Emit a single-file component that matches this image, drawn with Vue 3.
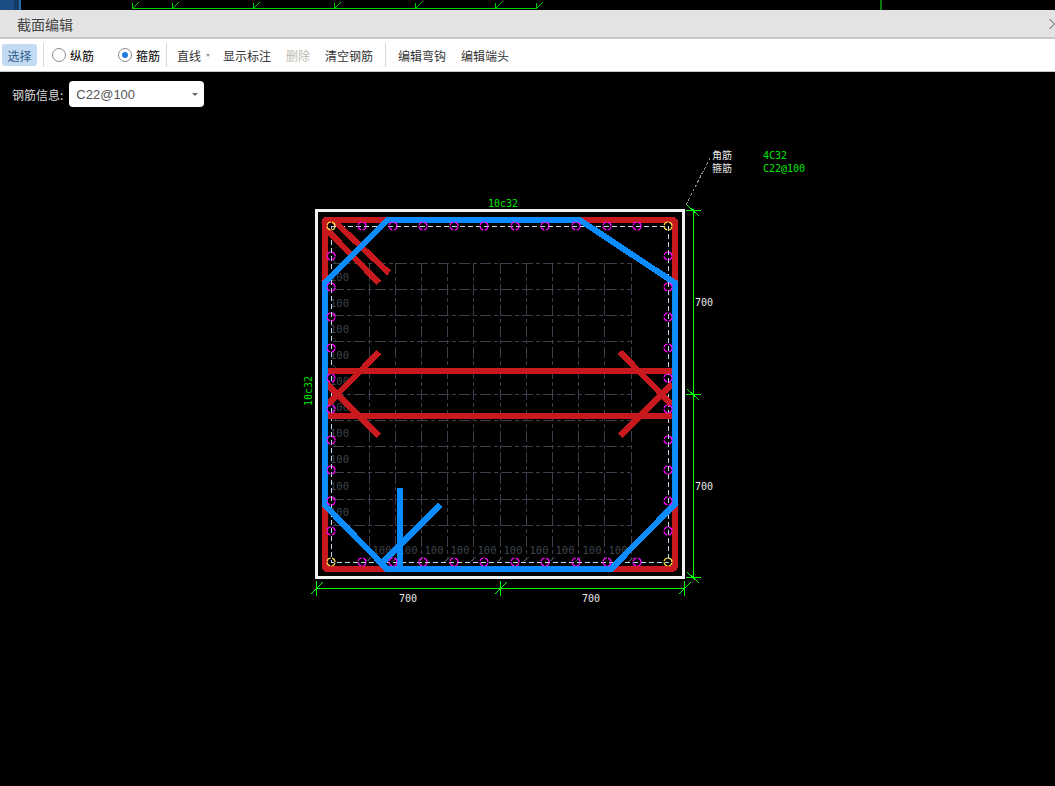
<script setup>
const topTicks = [132, 172, 253, 334, 415, 495, 536]
const railTop = [331, 362, 393, 423, 454, 484, 515, 545, 576, 607, 637, 668]
const railSide = [226, 256, 287, 317, 348, 378, 409, 440, 470, 501, 531, 562]
const corners = [[331, 226], [668, 226], [331, 562], [668, 562]]
const isCorner = (x, y) => corners.some(([a, b]) => a === x && b === y)
const rebars = []
railTop.forEach((x) => {
  rebars.push([x, 226], [x, 562])
})
railSide.slice(1, -1).forEach((y) => {
  rebars.push([331, y], [668, y])
})
const gridX = [369, 395, 421, 447, 473, 500, 526, 552, 578, 604, 631]
const gridY = [263, 289, 315, 341, 368, 394, 420, 446, 472, 499, 525]
const sideLabels = [277, 303, 329, 355, 381, 407, 433, 459, 486, 512]
const bottomLabels = [382, 408, 434, 460, 487, 513, 539, 565, 592, 618]
const redLines = [
  [333, 220, 389, 273],
  [327, 230, 379, 283],
  [327, 371, 672, 371],
  [327, 416, 672, 416],
  [379, 352, 327, 405],
  [379, 436, 327, 384],
  [620, 352, 672, 405],
  [620, 436, 672, 384]
]
const dimTicksBottom = [316, 500, 684]
const dimTicksRight = [210, 394, 577]
</script>

<template>
  <div class="page">
    <svg class="strip" width="1055" height="10" viewBox="0 0 1055 10">
      <rect x="0" y="0" width="14" height="10" fill="#1c4d86" />
      <rect x="14" y="0" width="5" height="10" fill="#143a66" />
      <rect x="19" y="0" width="2" height="10" fill="#2a6bb0" />
      <rect x="132" y="8" width="404" height="1" fill="#00d000" />
      <g v-for="x in topTicks" :key="x" stroke="#00d000">
        <line :x1="x" y1="9" :x2="x + 7" y2="2" />
        <line :x1="x + 0.5" y1="3" :x2="x + 0.5" y2="9" />
      </g>
      <rect x="880" y="0" width="2" height="10" fill="#0b7a0b" />
    </svg>

    <header class="title-bar">
      <span class="title">截面编辑</span>
      <svg class="chevron" width="6" height="12" viewBox="0 0 6 12">
        <path d="M0.5 1L5.5 6L0.5 11" fill="none" stroke="#999" stroke-width="1.4" />
      </svg>
    </header>

    <nav class="toolbar">
      <button class="tool selected">选择</button>
      <i class="sep sep-a"></i>
      <label class="radio first"><i class="dot"></i><span>纵筋</span></label>
      <label class="radio second"><i class="dot on"></i><span>箍筋</span></label>
      <i class="sep sep-b"></i>
      <span class="drop">直线<i class="caret"></i></span>
      <span class="item show">显示标注</span>
      <span class="item disabled">删除</span>
      <span class="item clear">清空钢筋</span>
      <i class="sep sep-c"></i>
      <span class="item hook">编辑弯钩</span>
      <span class="item end">编辑端头</span>
    </nav>

    <main class="stage">
      <svg class="canvas" width="1055" height="714" viewBox="0 72 1055 714">
        <!-- grid -->
        <g stroke="#3a404c" stroke-dasharray="11 3 4 3" fill="none">
          <line v-for="y in gridY" :key="'h' + y" x1="333" :y1="y + 0.5" x2="631" :y2="y + 0.5" />
          <line v-for="x in gridX" :key="'v' + x" :x1="x + 0.5" y1="263" :x2="x + 0.5" y2="560" />
        </g>
        <g stroke="#3a404c">
          <line v-for="y in gridY" :key="'t' + y" x1="333" :y1="y - 3" x2="337" :y2="y + 1" />
          <line v-for="x in gridX" :key="'b' + x" :x1="x - 3" y1="562" :x2="x + 3" y2="557" />
        </g>
        <g class="grid-label">
          <text v-for="y in sideLabels" :key="'sl' + y" x="349" :y="y + 4" text-anchor="end">100</text>
          <text v-for="x in bottomLabels" :key="'bl' + x" :x="x" y="554" text-anchor="middle">100</text>
        </g>

        <!-- section outline -->
        <rect x="316.5" y="210.5" width="367" height="367" fill="none" stroke="#f2f2f2" stroke-width="3" />
        <rect x="331.5" y="226.5" width="337" height="336" fill="none" stroke="#c4d8ee" stroke-dasharray="5 3" />

        <!-- dimensions -->
        <g stroke="#00ff00" fill="none">
          <line x1="316" y1="588.5" x2="684" y2="588.5" />
          <g v-for="x in dimTicksBottom" :key="'db' + x">
            <line :x1="x + 0.5" y1="581" :x2="x + 0.5" y2="596" />
            <line :x1="x - 5" y1="594" :x2="x + 7" y2="582" />
          </g>
          <line x1="693.5" y1="209" x2="693.5" y2="578" />
          <g v-for="y in dimTicksRight" :key="'dr' + y">
            <line x1="686" :y1="y + 0.5" x2="701" :y2="y + 0.5" />
            <line x1="687" :y1="y - 5" x2="699" :y2="y + 6" />
          </g>
        </g>
        <line x1="686" y1="205" x2="711" y2="156" stroke="#8c8c8c" stroke-dasharray="3 2" />

        <!-- stirrups -->
        <rect x="324.5" y="219.5" width="350.5" height="349.5" rx="3" fill="none" stroke="#c8191f" stroke-width="6" />
        <g stroke="#c8191f" stroke-width="6">
          <line v-for="(l, i) in redLines" :key="'r' + i" :x1="l[0]" :y1="l[1]" :x2="l[2]" :y2="l[3]" />
        </g>
        <path
          d="M388 219.5H579L675 283V504L611 569H387L324.5 505V283Z"
          fill="none"
          stroke="#0a8bff"
          stroke-width="6"
          stroke-linejoin="round"
        />
        <g stroke="#0a8bff" stroke-width="6">
          <line x1="400" y1="488" x2="400" y2="569" />
          <line x1="440" y1="505" x2="382" y2="563" />
        </g>

        <!-- bars -->
        <g fill="none" stroke="#ff00ff" stroke-width="1.2" stroke-dasharray="5 1.28" stroke-dashoffset="-0.64">
          <circle v-for="b in rebars.filter((p) => !isCorner(p[0], p[1]))" :key="b.join()" :cx="b[0]" :cy="b[1]" r="4" />
        </g>
        <g fill="none" stroke="#ffe14a" stroke-width="1.2" stroke-dasharray="5 1.28" stroke-dashoffset="-0.64">
          <circle v-for="c in corners" :key="c.join()" :cx="c[0]" :cy="c[1]" r="4" />
        </g>

        <!-- labels -->
        <g class="cad green">
          <text x="503" y="207" text-anchor="middle">10c32</text>
          <text transform="translate(312 391) rotate(-90)" text-anchor="middle">10c32</text>
          <text x="763" y="159">4C32</text>
          <text x="763" y="172">C22@100</text>
        </g>
        <g class="cad white">
          <text x="408" y="602" text-anchor="middle">700</text>
          <text x="591" y="602" text-anchor="middle">700</text>
          <text x="695" y="306">700</text>
          <text x="695" y="490">700</text>
          <text x="712" y="159" class="cjk">角筋</text>
          <text x="712" y="172" class="cjk">箍筋</text>
        </g>
      </svg>

      <div class="info">
        <span class="info-label">钢筋信息:</span>
        <div class="select">
          <span>C22@100</span>
          <i class="caret dark"></i>
        </div>
      </div>
    </main>
  </div>
</template>

<style>
html,
body {
  margin: 0;
  background: #000;
  overflow: hidden;
}
</style>

<style scoped>
.page {
  width: 1055px;
  height: 786px;
  background: #000;
  display: flex;
  flex-direction: column;
  overflow: hidden;
  font-family: "Noto Sans CJK SC", "Liberation Sans", sans-serif;
}
.strip {
  display: block;
  flex: none;
}
.title-bar {
  height: 27px;
  flex: none;
  display: flex;
  align-items: center;
  justify-content: space-between;
  background: #e3e3e3;
  border-bottom: 2px solid #c2c8cc;
  padding-left: 17px;
}
.title {
  font-size: 14px;
  color: #444;
}
.chevron {
  display: block;
}
.toolbar {
  height: 32px;
  flex: none;
  display: flex;
  align-items: center;
  background: #fff;
  border-bottom: 1px solid #c8c8c8;
  font-size: 12px;
  color: #333;
}
.tool {
  margin-left: 2px;
  width: 35px;
  height: 22px;
  border: 0;
  border-radius: 3px;
  padding: 0;
  font: inherit;
  cursor: pointer;
}
.selected {
  background: #c3daf3;
  color: #2f5d8c;
}
.sep {
  width: 1px;
  height: 24px;
  background: #d9d9d9;
  flex: none;
}
.sep-a {
  margin-left: 6px;
}
.radio {
  display: flex;
  align-items: center;
  gap: 4px;
  color: #000;
}
.radio.first {
  margin-left: 8px;
}
.radio.second {
  margin-left: 24px;
}
.dot {
  width: 12px;
  height: 12px;
  border: 1px solid #8a8a8a;
  border-radius: 50%;
  position: relative;
  display: block;
  background: #fff;
}
.dot.on::after {
  content: "";
  position: absolute;
  left: 3px;
  top: 3px;
  width: 6px;
  height: 6px;
  border-radius: 50%;
  background: #1f7ae0;
}
.sep-b {
  margin-left: 6px;
}
.drop {
  margin-left: 10px;
  display: flex;
  align-items: center;
  font-size: 12px;
}
.caret {
  width: 0;
  height: 0;
  border-left: 2.5px solid transparent;
  border-right: 2.5px solid transparent;
  border-top: 3px solid #999;
  margin-left: 5px;
  display: block;
}
.item {
  flex: none;
}
.show {
  margin-left: 13px;
}
.disabled {
  margin-left: 15px;
  color: #bdbab0;
}
.clear {
  margin-left: 15px;
}
.sep-c {
  margin-left: 12px;
}
.hook {
  margin-left: 12px;
}
.end {
  margin-left: 15px;
}
.stage {
  position: relative;
  flex: 1;
  min-height: 0;
}
.canvas {
  position: absolute;
  left: 0;
  top: 0;
  display: block;
}
.info {
  position: relative;
  display: flex;
  align-items: center;
  padding: 9px 0 0 12px;
  gap: 6px;
}
.info-label {
  font-size: 12px;
  color: #dcdcdc;
}
.select {
  width: 135px;
  height: 26px;
  box-sizing: border-box;
  background: #fff;
  border-radius: 4px;
  display: flex;
  align-items: center;
  justify-content: space-between;
  padding: 0 6px 0 7px;
  font-family: "Liberation Sans", sans-serif;
  font-size: 13px;
  color: #555;
}
.caret.dark {
  border-left-width: 3px;
  border-right-width: 3px;
  border-top-color: #666;
}
.grid-label text {
  font-family: "DejaVu Sans Mono", monospace;
  font-size: 10.5px;
  fill: #3f444c;
}
.cad text {
  font-family: "DejaVu Sans Mono", monospace;
  font-size: 10px;
}
.cad .cjk {
  font-family: "Noto Sans CJK SC", sans-serif;
}
.green text {
  fill: #00e600;
}
.white text {
  fill: #e8e8e8;
}
svg line,
svg rect,
svg path {
  shape-rendering: crispEdges;
}
</style>
